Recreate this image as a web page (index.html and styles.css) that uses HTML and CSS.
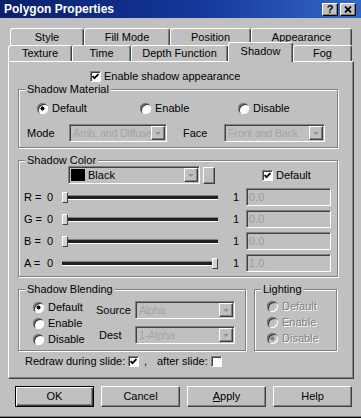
FILE: index.html
```html
<!DOCTYPE html>
<html lang="en">
<head>
    <meta charset="UTF-8">
    <title>Polygon Properties</title>
    <link rel="stylesheet" href="styles.css">
</head>
<body>
<div class="dialog">
    <div class="titlebar">
        <span class="title">Polygon Properties</span>
        <span class="title-buttons">
            <span class="title-btn">?</span>
            <span class="title-btn">
                <svg width="8" height="7" viewBox="0 0 8 7"><path d="M1 0.5 L7 6.5 M7 0.5 L1 6.5" stroke="#000" stroke-width="1.8"/></svg>
            </span>
        </span>
    </div>

    <!-- Tabs -->
    <div class="tabs">
        <div class="tab-row back">
            <div class="tab t-style">Style</div>
            <div class="tab t-fill">Fill Mode</div>
            <div class="tab t-position">Position</div>
            <div class="tab t-appearance">Appearance</div>
        </div>
        <div class="tab-row front">
            <div class="tab t-texture">Texture</div>
            <div class="tab t-time">Time</div>
            <div class="tab t-depth">Depth Function</div>
            <div class="tab t-shadow active">Shadow</div>
            <div class="tab t-fog">Fog</div>
        </div>
    </div>

    <div class="panel">
        <div class="enable-row">
            <span class="check"><svg width="7" height="7" viewBox="0 0 7 7"><path d="M0.5 3 L2.5 5.2 L6.5 1" fill="none" stroke="#000" stroke-width="1.8"/></svg></span>
            <span>Enable shadow appearance</span>
        </div>

        <fieldset class="group material">
            <legend>Shadow Material</legend>
            <div class="material-radios">
                <span class="opt"><span class="radio on"></span>Default</span>
                <span class="opt"><span class="radio"></span>Enable</span>
                <span class="opt"><span class="radio"></span>Disable</span>
            </div>
            <div class="mode-row">
                <span class="lbl-mode">Mode</span>
                <div class="combo w98"><span class="combo-text">Amb. and Diffuse</span><span class="combo-arrow"></span></div>
                <span class="lbl-face">Face</span>
                <div class="combo w101"><span class="combo-text">Front and Back</span><span class="combo-arrow"></span></div>
            </div>
        </fieldset>

        <fieldset class="group color">
            <legend>Shadow Color</legend>
            <div class="color-row">
                <div class="combo w132">
                    <span class="swatch"></span>
                    <span class="combo-text enabled">Black</span>
                    <span class="combo-arrow"></span>
                </div>
                <span class="more-btn">...</span>
                <span class="opt default-opt">
                    <span class="check"><svg width="7" height="7" viewBox="0 0 7 7"><path d="M0.5 3 L2.5 5.2 L6.5 1" fill="none" stroke="#000" stroke-width="1.8"/></svg></span>
                    Default
                </span>
            </div>
            <div class="sliders">
                <div class="slider-row">
                    <span class="ch">R =</span><span class="lo">0</span>
                    <div class="slider"><span class="thumb"></span></div>
                    <span class="hi">1</span><span class="field">0.0</span>
                </div>
                <div class="slider-row">
                    <span class="ch">G =</span><span class="lo">0</span>
                    <div class="slider"><span class="thumb"></span></div>
                    <span class="hi">1</span><span class="field">0.0</span>
                </div>
                <div class="slider-row">
                    <span class="ch">B =</span><span class="lo">0</span>
                    <div class="slider"><span class="thumb"></span></div>
                    <span class="hi">1</span><span class="field">0.0</span>
                </div>
                <div class="slider-row">
                    <span class="ch">A =</span><span class="lo">0</span>
                    <div class="slider max"><span class="thumb"></span></div>
                    <span class="hi">1</span><span class="field">1.0</span>
                </div>
            </div>
        </fieldset>

        <div class="lower">
            <fieldset class="group blending">
                <legend>Shadow Blending</legend>
                <div class="blend-body">
                    <div class="radio-col">
                        <span class="opt"><span class="radio on"></span>Default</span>
                        <span class="opt"><span class="radio"></span>Enable</span>
                        <span class="opt"><span class="radio"></span>Disable</span>
                    </div>
                    <div class="combo-col">
                        <div class="combo-line">
                            <span class="lbl-source">Source</span>
                            <div class="combo w100"><span class="combo-text">Alpha</span><span class="combo-arrow"></span></div>
                        </div>
                        <div class="combo-line">
                            <span class="lbl-dest">Dest</span>
                            <div class="combo w100"><span class="combo-text">1-Alpha</span><span class="combo-arrow"></span></div>
                        </div>
                    </div>
                </div>
            </fieldset>

            <fieldset class="group lighting">
                <legend>Lighting</legend>
                <div class="light-body">
                    <span class="opt disabled"><span class="radio"></span>Default</span>
                    <span class="opt disabled"><span class="radio"></span>Enable</span>
                    <span class="opt disabled"><span class="radio on"></span>Disable</span>
                </div>
            </fieldset>
        </div>

        <div class="redraw-row">
            <span class="redraw-lbl">Redraw during slide:</span>
            <span class="check"><svg width="7" height="7" viewBox="0 0 7 7"><path d="M0.5 3 L2.5 5.2 L6.5 1" fill="none" stroke="#000" stroke-width="1.8"/></svg></span>
            <span class="comma">,</span>
            <span class="after-lbl">after slide:</span>
            <span class="check"></span>
        </div>
    </div>

    <div class="buttons">
        <span class="btn default">OK</span>
        <span class="btn">Cancel</span>
        <span class="btn"><span><u>A</u>pply</span></span>
        <span class="btn">Help</span>
    </div>
</div>
</body>
</html>
```

FILE: styles.css
```css
/* General Styles */
* {
    box-sizing: border-box;
}

body {
    margin: 0;
    background: #c0c0c0;
    font-family: "Liberation Sans", Arial, sans-serif;
    font-size: 11px;
    line-height: 13px;
    color: #000;
}

.dialog {
    width: 361px;
    height: 418px;
    background: #c0c0c0;
    box-shadow: inset 0 -1px #000, inset 0 -2px #808080;
    overflow: hidden;
}

/* Title bar */
.titlebar {
    height: 18px;
    display: flex;
    align-items: center;
    justify-content: space-between;
    padding: 0 5px 0 4px;
    background: linear-gradient(90deg, #0a1f6c 0%, #14379a 55%, #3468c8 100%);
}

.title {
    color: #fff;
    font-weight: bold;
    font-size: 12px;
}

.title-buttons {
    display: flex;
    gap: 2px;
}

.title-btn {
    width: 16px;
    height: 13px;
    background: #c0c0c0;
    border: 1px solid;
    border-color: #fff #000 #000 #fff;
    box-shadow: inset -1px -1px #808080;
    display: flex;
    align-items: center;
    justify-content: center;
    font-weight: bold;
    font-size: 11px;
}

/* Tabs */
.tabs {
    margin-top: 10px;
}

.tab-row {
    display: flex;
}

.tab-row.back {
    margin-left: 10px;
    height: 17px;
}

.tab-row.front {
    margin-left: 8px;
    height: 16px;
}

.tab {
    display: flex;
    align-items: center;
    justify-content: center;
    background: #c0c0c0;
    border-top: 1px solid #fff;
    border-left: 1px solid #fff;
    border-right: 1px solid #404040;
    box-shadow: inset -1px 0 #808080;
    border-radius: 3px 3px 0 0;
}

.tab.active {
    position: relative;
    z-index: 1;
    height: 20px;
    margin-top: -3px;
    align-items: flex-start;
    padding-top: 2px;
}

.t-style { width: 74px; }
.t-fill { width: 86px; }
.t-position { width: 81px; }
.t-appearance { width: 101px; }
.t-texture { width: 64px; }
.t-time { width: 59px; }
.t-depth { width: 97px; }
.t-shadow { width: 65px; }
.t-fog { width: 59px; }

/* Panel */
.panel {
    margin-left: 8px;
    width: 346px;
    height: 318px;
    border: 1px solid;
    border-color: #fff #404040 #404040 #fff;
    box-shadow: inset -1px -1px #808080;
    padding: 0 15px 0 9px;
}

.enable-row {
    margin-top: 7px;
    height: 14px;
    display: flex;
    align-items: center;
    gap: 3px;
    padding-left: 72px;
}

/* Group boxes */
.group {
    margin: 0;
    padding: 0;
    min-width: 0;
    border: 1px solid #808080;
    box-shadow: inset 1px 1px #fff, 1px 1px #fff;
}

.group legend {
    margin-left: 6px;
    padding: 0 2px;
    line-height: 13px;
    background: #c0c0c0;
}

.material {
    padding-bottom: 5px;
}

.material-radios {
    margin-top: 5px;
    height: 14px;
    display: grid;
    grid-template-columns: 103px 98px auto;
    padding-left: 18px;
}

.opt {
    display: flex;
    align-items: center;
    gap: 4px;
}

.opt.disabled {
    color: #808080;
    text-shadow: 1px 1px #fff;
}

.mode-row {
    margin-top: 9px;
    display: flex;
    align-items: center;
    padding-left: 8px;
}

.lbl-mode { width: 42px; }
.lbl-face { width: 41px; margin-left: 16px; }

/* Controls */
.check {
    width: 11px;
    height: 11px;
    flex: none;
    background: #fff;
    border: 1px solid;
    border-color: #808080 #fff #fff #808080;
    box-shadow: inset 1px 1px #404040;
    display: flex;
    align-items: center;
    justify-content: center;
}

.radio {
    width: 11px;
    height: 11px;
    flex: none;
    border-radius: 50%;
    background: #fff;
    box-shadow: inset 1px 1px #808080, inset 2px 2px #404040, inset -1px -1px #fff;
}

.radio.on {
    background: radial-gradient(circle, #000 0 1.8px, #fff 2.3px);
}

.opt.disabled .radio {
    background: #c0c0c0;
    text-shadow: none;
}

.opt.disabled .radio.on {
    background: radial-gradient(circle, #808080 0 1.8px, #c0c0c0 2.3px);
}

.combo {
    height: 18px;
    display: flex;
    align-items: center;
    padding: 1px;
    border: 1px solid;
    border-color: #808080 #fff #fff #808080;
    box-shadow: inset 1px 1px #404040;
    background: #c0c0c0;
}

.w98 { width: 98px; }
.w100 { width: 100px; }
.w101 { width: 101px; }
.w132 { width: 132px; }

.combo-text {
    flex: 1;
    padding-left: 2px;
    color: #a4a4a4;
    letter-spacing: -0.35px;
    white-space: nowrap;
    overflow: hidden;
}

.combo-text.enabled {
    color: #000;
    padding-left: 3px;
    letter-spacing: 0;
}

.combo-arrow {
    width: 14px;
    height: 14px;
    flex: none;
    border: 1px solid;
    border-color: #fff #404040 #404040 #fff;
    box-shadow: inset -1px -1px #808080;
    display: flex;
    align-items: center;
    justify-content: center;
}

.combo-arrow::after {
    content: "";
    border-left: 3px solid transparent;
    border-right: 3px solid transparent;
    border-top: 3px solid #909090;
}

.swatch {
    width: 14px;
    height: 12px;
    margin-left: 1px;
    background: #000;
}

.field {
    width: 85px;
    height: 18px;
    display: flex;
    align-items: center;
    padding-left: 2px;
    border: 1px solid;
    border-color: #808080 #fff #fff #808080;
    box-shadow: inset 1px 1px #404040;
    color: #9c9c9c;
}

/* Shadow Color */
.color {
    margin-top: 6px;
    padding-bottom: 2px;
}

.color-row {
    margin-top: -1px;
    height: 18px;
    display: flex;
    align-items: center;
    padding-left: 49px;
}

.more-btn {
    width: 12px;
    height: 17px;
    margin-left: 3px;
    border: 1px solid;
    border-color: #fff #404040 #404040 #fff;
    box-shadow: inset -1px -1px #808080;
    color: #a0a0a0;
    font-size: 7px;
    line-height: 20px;
    text-align: center;
    overflow: hidden;
}

.default-opt {
    margin-left: 47px;
    gap: 3px;
}

.sliders {
    margin-top: 2px;
}

.slider-row {
    height: 22px;
    display: flex;
    align-items: center;
    padding-left: 5px;
}

.ch { width: 23px; }
.lo { width: 15px; }
.hi { width: 13px; margin-left: 15px; }

.slider {
    position: relative;
    width: 156px;
    height: 14px;
    display: flex;
    align-items: center;
}

.slider::before {
    content: "";
    position: absolute;
    left: 0;
    right: 0;
    top: 5px;
    height: 3px;
    border-top: 1px solid #808080;
    border-bottom: 1px solid #fff;
    background: #202020;
}

.slider.max {
    justify-content: flex-end;
}

.thumb {
    position: relative;
    width: 6px;
    height: 11px;
    background: #d4d4d4;
    border: 1px solid;
    border-color: #fff #404040 #404040 #fff;
}

/* Blending and lighting */
.lower {
    margin-top: 6px;
    display: flex;
    gap: 8px;
}

.blending {
    width: 228px;
    padding-bottom: 3px;
}

.lighting {
    width: 83px;
    padding-bottom: 3px;
}

.blend-body {
    display: flex;
    align-items: flex-start;
}

.radio-col {
    width: 77px;
    margin-top: 3px;
    padding-left: 14px;
}

.radio-col .opt,
.light-body .opt {
    height: 16px;
}

.combo-col {
    margin-top: 5px;
    display: flex;
    flex-direction: column;
    gap: 7px;
}

.combo-line {
    display: flex;
    align-items: center;
}

.lbl-source { width: 39px; }
.lbl-dest { width: 39px; padding-left: 3px; }

.light-body {
    margin-top: 2px;
    padding-left: 12px;
}

/* Redraw row */
.redraw-row {
    margin-top: 3px;
    height: 14px;
    display: flex;
    align-items: center;
    padding-left: 7px;
}

.redraw-lbl { width: 103px; }
.comma { width: 18px; padding-left: 5px; }
.after-lbl { width: 54px; }

/* Button Styles */
.buttons {
    display: flex;
    gap: 7px;
    padding-left: 15px;
    margin-top: 7px;
}

.btn {
    width: 79px;
    height: 21px;
    display: flex;
    align-items: center;
    justify-content: center;
    border: 1px solid;
    border-color: #fff #404040 #404040 #fff;
    box-shadow: inset -1px -1px #808080;
}

.btn.default {
    border-color: #000;
    box-shadow: inset 1px 1px #fff, inset -1px -1px #404040, inset -2px -2px #808080;
}
```
